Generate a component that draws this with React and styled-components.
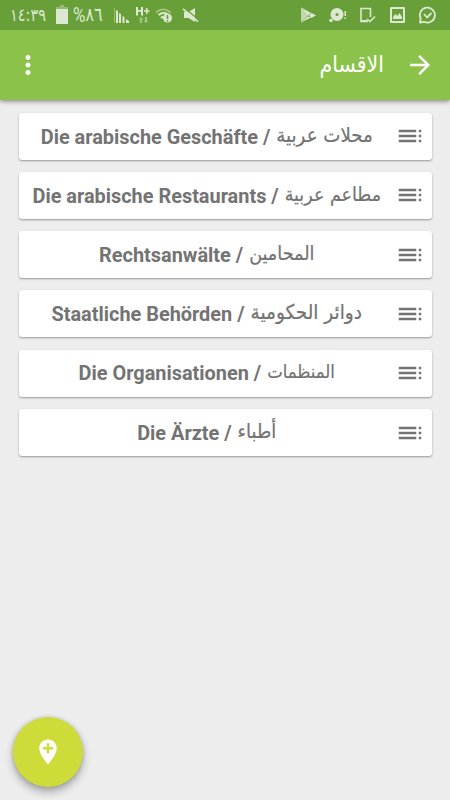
import React from "react";
import styled, { createGlobalStyle } from "styled-components";

const GlobalStyle = createGlobalStyle`
  * {
    box-sizing: border-box;
  }
  body {
    margin: 0;
    background: #ededed;
    font-family: Roboto, "DejaVu Sans", sans-serif;
  }
`;

const Screen = styled.div`
  display: flex;
  flex-direction: column;
  width: 450px;
  height: 800px;
  overflow: hidden;
  background: #ededed;
`;

const StatusBar = styled.div`
  position: relative;
  z-index: 1;
  display: flex;
  flex: none;
  align-items: center;
  height: 30px;
  padding: 0 13px 0 10px;
  background: #689f38;
  color: #dce9d0;
`;

const StatusText = styled.span`
  display: flex;
  align-items: center;
  width: ${(props) => props.$width}px;
  height: 20px;
  margin-right: ${(props) => props.$gap}px;
  line-height: 20px;
  font-size: ${(props) => props.$size}px;
  font-family: "DejaVu Sans", sans-serif;
  white-space: nowrap;
  transform: translateY(-0.5px) scaleY(1.2);
`;

const Percent = styled.span`
  font-family: Roboto, sans-serif;
  font-size: 17px;
`;

const StatusIcon = styled.svg`
  flex: none;
  width: ${(props) => props.$width}px;
  height: 20px;
  margin-right: ${(props) => props.$gap || 0}px;
  fill: currentColor;
`;

const StatusSpacer = styled.div`
  flex: 1;
`;

const AppBar = styled.header`
  display: flex;
  flex: none;
  align-items: center;
  height: 70px;
  padding: 0 15px 0 12.5px;
  background: #8bc34a;
  color: #fff;
  box-shadow: 0 1px 5px rgba(0, 0, 0, 0.5);
`;

const Title = styled.h1`
  flex: 1;
  margin: 0 21px 3px 0;
  font-family: "DejaVu Sans", sans-serif;
  font-size: 20.5px;
  font-weight: 400;
  line-height: 30px;
  transform: scaleY(1.12);
`;

const Icon = styled.svg`
  flex: none;
  width: 30px;
  height: 30px;
  fill: currentColor;
`;

const List = styled.main`
  display: flex;
  flex: 1;
  flex-direction: column;
  gap: 12.3px;
  padding: 12.6px 18.5px 0 18.5px;
`;

const Card = styled.div`
  display: flex;
  flex: none;
  align-items: center;
  height: 47px;
  padding-right: 6.5px;
  border-radius: 3px;
  background: #fff;
  color: #737373;
  box-shadow: 0 1px 2px rgba(0, 0, 0, 0.36);
`;

const Label = styled.div`
  display: flex;
  flex: 1;
  align-items: baseline;
  justify-content: center;
  gap: 6px;
  padding-top: 3px;
  white-space: nowrap;
`;

const German = styled.span`
  font-size: 19.9px;
  font-weight: 700;
  line-height: 24px;
`;

const Arabic = styled.span`
  font-family: "DejaVu Sans", sans-serif;
  font-size: ${(props) => props.$size}px;
  line-height: 24px;
  -webkit-text-stroke: 0.2px currentColor;
  transform: translateY(-2.4px) scaleY(1.1);
`;

const Fab = styled.button`
  position: absolute;
  top: 717px;
  left: 12.5px;
  display: flex;
  align-items: center;
  justify-content: center;
  width: 70px;
  height: 70px;
  padding: 0;
  border: 0;
  border-radius: 50%;
  background: #cddc39;
  color: #fff;
  box-shadow: 0 5px 8px rgba(0, 0, 0, 0.3), 0 0 4px rgba(0, 0, 0, 0.15);
`;

const sections = [
  { german: "Die arabische Geschäfte", arabic: "محلات عربية", size: 18.2 },
  { german: "Die arabische Restaurants", arabic: "مطاعم عربية", size: 17.5 },
  { german: "Rechtsanwälte", arabic: "المحامين", size: 17.6 },
  { german: "Staatliche Behörden", arabic: "دوائر الحكومية", size: 18.5 },
  { german: "Die Organisationen", arabic: "المنظمات", size: 16.5 },
  { german: "Die Ärzte", arabic: "أطباء", size: 18 },
];

function StatusLeft() {
  return (
    <>
      <StatusText $width={36} $gap={9} $size={14.5} dir="ltr">
        <bdi>١٤</bdi>:<bdi>٣٩</bdi>
      </StatusText>
      <StatusIcon viewBox="0 0 14 20" $width={14} $gap={4}>
        <path opacity=".4" d="M5 0h4v2h4v4H1V2h4z" />
        <path d="M1 4h12v15H1z" />
      </StatusIcon>
      <StatusText $width={31} $gap={9} $size={16} dir="ltr">
        <Percent>%</Percent>
        <bdi>٨٦</bdi>
      </StatusText>
      <StatusIcon viewBox="0 0 18 20" $width={18} $gap={5}>
        <path opacity=".4" d="M1 3h1v15H1z" />
        <path d="M3 5l2 1v12H3zM6 8l2 1v9H6zM9.500 11l2 1v6h-2zM13 14l3 2v2h-3z" />
      </StatusIcon>
      <StatusIcon viewBox="0 0 14 20" $width={14} $gap={5}>
        <path d="M0 2h2v3h3V2h2v8.500H5V6.800H2v3.700H0zM10 3h1.500v2.200h2v1.500h-2V9H10V6.700H8V5.200h2z" />
        <path opacity=".5" d="M5 12l-2.500 2.500H4V18h2v-3.500h1.500zM10 18l2.500-2.500H11V12H9v3.500H7.500z" />
      </StatusIcon>
      <StatusIcon viewBox="0 0 18 20" $width={18} $gap={9}>
        <g fill="none" stroke="currentColor" strokeWidth="2">
          <path opacity=".5" d="M1 7.500c4.500-4 10-4 14.500 0" />
          <path d="M3.500 10c3-2.500 6-2.700 9-1M6 13c1-1 2-1.200 3-1" />
        </g>
        <circle cx="12.500" cy="13" r="4.500" />
        <path fill="#689f38" d="M11.700 10h1.600v4h-1.600zM11.700 15h1.600v1.500h-1.600z" />
      </StatusIcon>
      <StatusIcon viewBox="0 0 18 20" $width={18}>
        <path d="M2 7h4.500L13 3v14l-6.500-4H2z" />
        <path d="M2 2.500l15 12.500" stroke="#689f38" strokeWidth="1.500" />
        <path d="M1 3.800l15 12.800" stroke="currentColor" strokeWidth="1.700" />
      </StatusIcon>
    </>
  );
}

function StatusRight() {
  return (
    <>
      <StatusIcon viewBox="0 0 17 20" $width={17} $gap={12}>
        <path d="M1 2.500L11 8l-3 2.500zM1 17.500l7-6 3 1zM11.500 8L16 10.300 11.500 13 9 10.500z" />
        <path opacity=".75" d="M1 2.500l7.500 8L1 17.500z" />
      </StatusIcon>
      <StatusIcon viewBox="0 0 18 20" $width={18} $gap={12}>
        <circle cx="8" cy="9.500" r="6.500" />
        <circle cx="8" cy="9.500" r="1.500" fill="#689f38" />
        <circle cx="2" cy="15.500" r="1.800" />
        <path d="M15.500 6H17v5h-1.500zM15.500 12.500H17V14h-1.500z" />
      </StatusIcon>
      <StatusIcon viewBox="0 0 17 20" $width={17} $gap={13}>
        <path
          d="M11.500 12V3.500H2v13h7M8 14l3 2.500 5-5"
          fill="none"
          stroke="currentColor"
          strokeWidth="1.600"
        />
        <path d="M2 15h6v2H2z" />
      </StatusIcon>
      <StatusIcon viewBox="0 0 17 20" $width={17} $gap={12}>
        <path
          d="M2 3h13v14H2z"
          fill="none"
          stroke="currentColor"
          strokeWidth="2"
          strokeLinejoin="round"
        />
        <path d="M4 14V12l2.500-3 2 2 2-3L13 12v2z" />
      </StatusIcon>
      <StatusIcon viewBox="0 0 19 20" $width={19}>
        <path
          d="M2 17.500l.7-4A7.500 7.500 0 1 1 6 16.800zM6 9l3 3.500L13.500 8"
          fill="none"
          stroke="currentColor"
          strokeWidth="1.800"
          strokeLinejoin="round"
        />
      </StatusIcon>
    </>
  );
}

function SectionCard({ german, arabic, size }) {
  return (
    <Card>
      <Label>
        <German>{german} /</German>
        <Arabic $size={size} lang="ar" dir="rtl">
          {arabic}
        </Arabic>
      </Label>
      <Icon viewBox="0 0 24 24">
        <path d="M3 9h14V7H3v2zm0 4h14v-2H3v2zm0 4h14v-2H3v2zm16 0h2v-2h-2v2zm0-10v2h2V7h-2zm0 6h2v-2h-2v2z" />
      </Icon>
    </Card>
  );
}

function App() {
  return (
    <>
      <GlobalStyle />
      <Screen>
        <StatusBar>
          <StatusLeft />
          <StatusSpacer />
          <StatusRight />
        </StatusBar>
        <AppBar>
          <Icon viewBox="0 0 24 24">
            <path d="M12 8c1.100 0 2-.9 2-2s-.9-2-2-2-2 .9-2 2 .9 2 2 2zm0 2c-1.100 0-2 .9-2 2s.9 2 2 2 2-.9 2-2-.9-2-2-2zm0 6c-1.100 0-2 .9-2 2s.9 2 2 2 2-.9 2-2-.9-2-2-2z" />
          </Icon>
          <Title lang="ar" dir="rtl">
            الاقسام
          </Title>
          <Icon viewBox="0 0 24 24">
            <path d="M12 4l-1.410 1.410L16.170 11H4v2h12.170l-5.580 5.590L12 20l8-8z" />
          </Icon>
        </AppBar>
        <List>
          {sections.map((section) => (
            <SectionCard key={section.german} {...section} />
          ))}
        </List>
        <Fab>
          <Icon viewBox="0 0 24 24">
            <path d="M12 2C8.140 2 5 5.140 5 9c0 5.250 7 13 7 13s7-7.750 7-13c0-3.860-3.140-7-7-7zm4 8h-3v3h-2v-3H8V8h3V5h2v3h3v2z" />
          </Icon>
        </Fab>
      </Screen>
    </>
  );
}

export default App;
